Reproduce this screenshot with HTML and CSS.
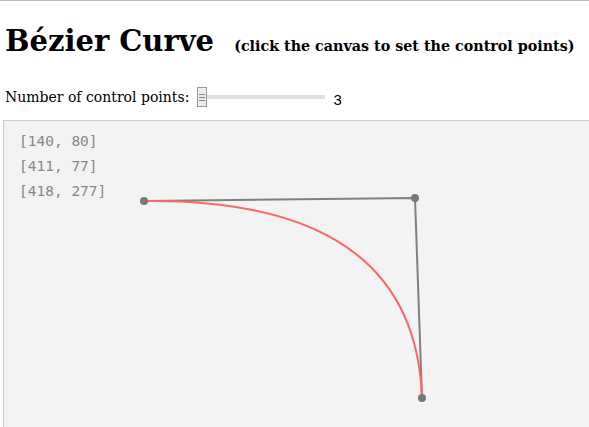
FILE: index.html
```html
<!DOCTYPE html>
<html lang="en">
<head>
  <meta charset="UTF-8" />
  <title>Bézier Curve</title>
  <link rel="stylesheet" href="styles.css">
</head>
<body>
  <div class="page">
    <h1>Bézier Curve <small>(click the canvas to set the control points)</small></h1>

    <div class="controls">
      <label for="count">Number of control points:</label>
      <input type="range" id="count" min="3" max="10" value="3" />
      <output id="countOut">3</output>
    </div>

    <div class="board">
      <!-- coordinates of the points -->
      <div class="coords">
        <div>[140, 80]</div>
        <div>[411, 77]</div>
        <div>[418, 277]</div>
      </div>
      <svg width="585" height="306" viewBox="0 0 585 306">
        <polyline points="140,80 411,77 418,277" fill="none" stroke="#808080" stroke-width="2" />
        <path d="M140,80 Q411,77 418,277" fill="none" stroke="#ff6666" stroke-width="2" />
        <circle cx="140" cy="80" r="4" fill="#777" />
        <circle cx="411" cy="77" r="4" fill="#777" />
        <circle cx="418" cy="277" r="4" fill="#777" />
      </svg>
    </div>
  </div>
</body>
</html>
```
FILE: styles.css
```css
html, body {
  margin: 0;
  overflow: hidden;
}

body {
  border-top: 1px solid #bbb;
  font-family: "DejaVu Serif", Georgia, serif;
  color: #000;
  background: #fff;
}

.page {
  padding: 0 0 0 3px;
}

h1 {
  font-size: 29px;
  font-weight: bold;
  margin: 20px 0 0 2px;
  line-height: 40px;
  white-space: nowrap;
}

h1 small {
  font-size: 14.3px;
  margin-left: 10px;
}

.controls {
  display: flex;
  align-items: center;
  height: 26px;
  margin: 18px 0 0 2px;
  font-size: 14px;
}

.controls label {
  margin-right: 8px;
}

.controls output {
  font-family: "Liberation Sans", Arial, sans-serif;
  font-size: 15px;
  margin-left: 8px;
  padding-top: 4px;
}

input[type=range] {
  -webkit-appearance: none;
  appearance: none;
  width: 128px;
  height: 20px;
  margin: 0;
  background: transparent;
}

input[type=range]::-webkit-slider-runnable-track {
  height: 4px;
  background: #e3dfda;
}

input[type=range]::-webkit-slider-thumb {
  -webkit-appearance: none;
  width: 10px;
  height: 20px;
  margin-top: -8px;
  border: 1px solid #999;
  background: repeating-linear-gradient(#888 0 1px, transparent 1px 3px) no-repeat center / 6px 7px, #efece8;
}

.board {
  position: relative;
  width: 585px;
  height: 306px;
  margin-top: 10px;
  border: 1px solid #ccc;
  border-right: none;
  border-bottom: none;
  background: #f3f3f3;
}

.board svg {
  display: block;
}

.coords {
  position: absolute;
  left: 15px;
  top: 8px;
  font-family: "DejaVu Sans Mono", Consolas, monospace;
  font-size: 14.5px;
  line-height: 25px;
  color: #888;
}
```
